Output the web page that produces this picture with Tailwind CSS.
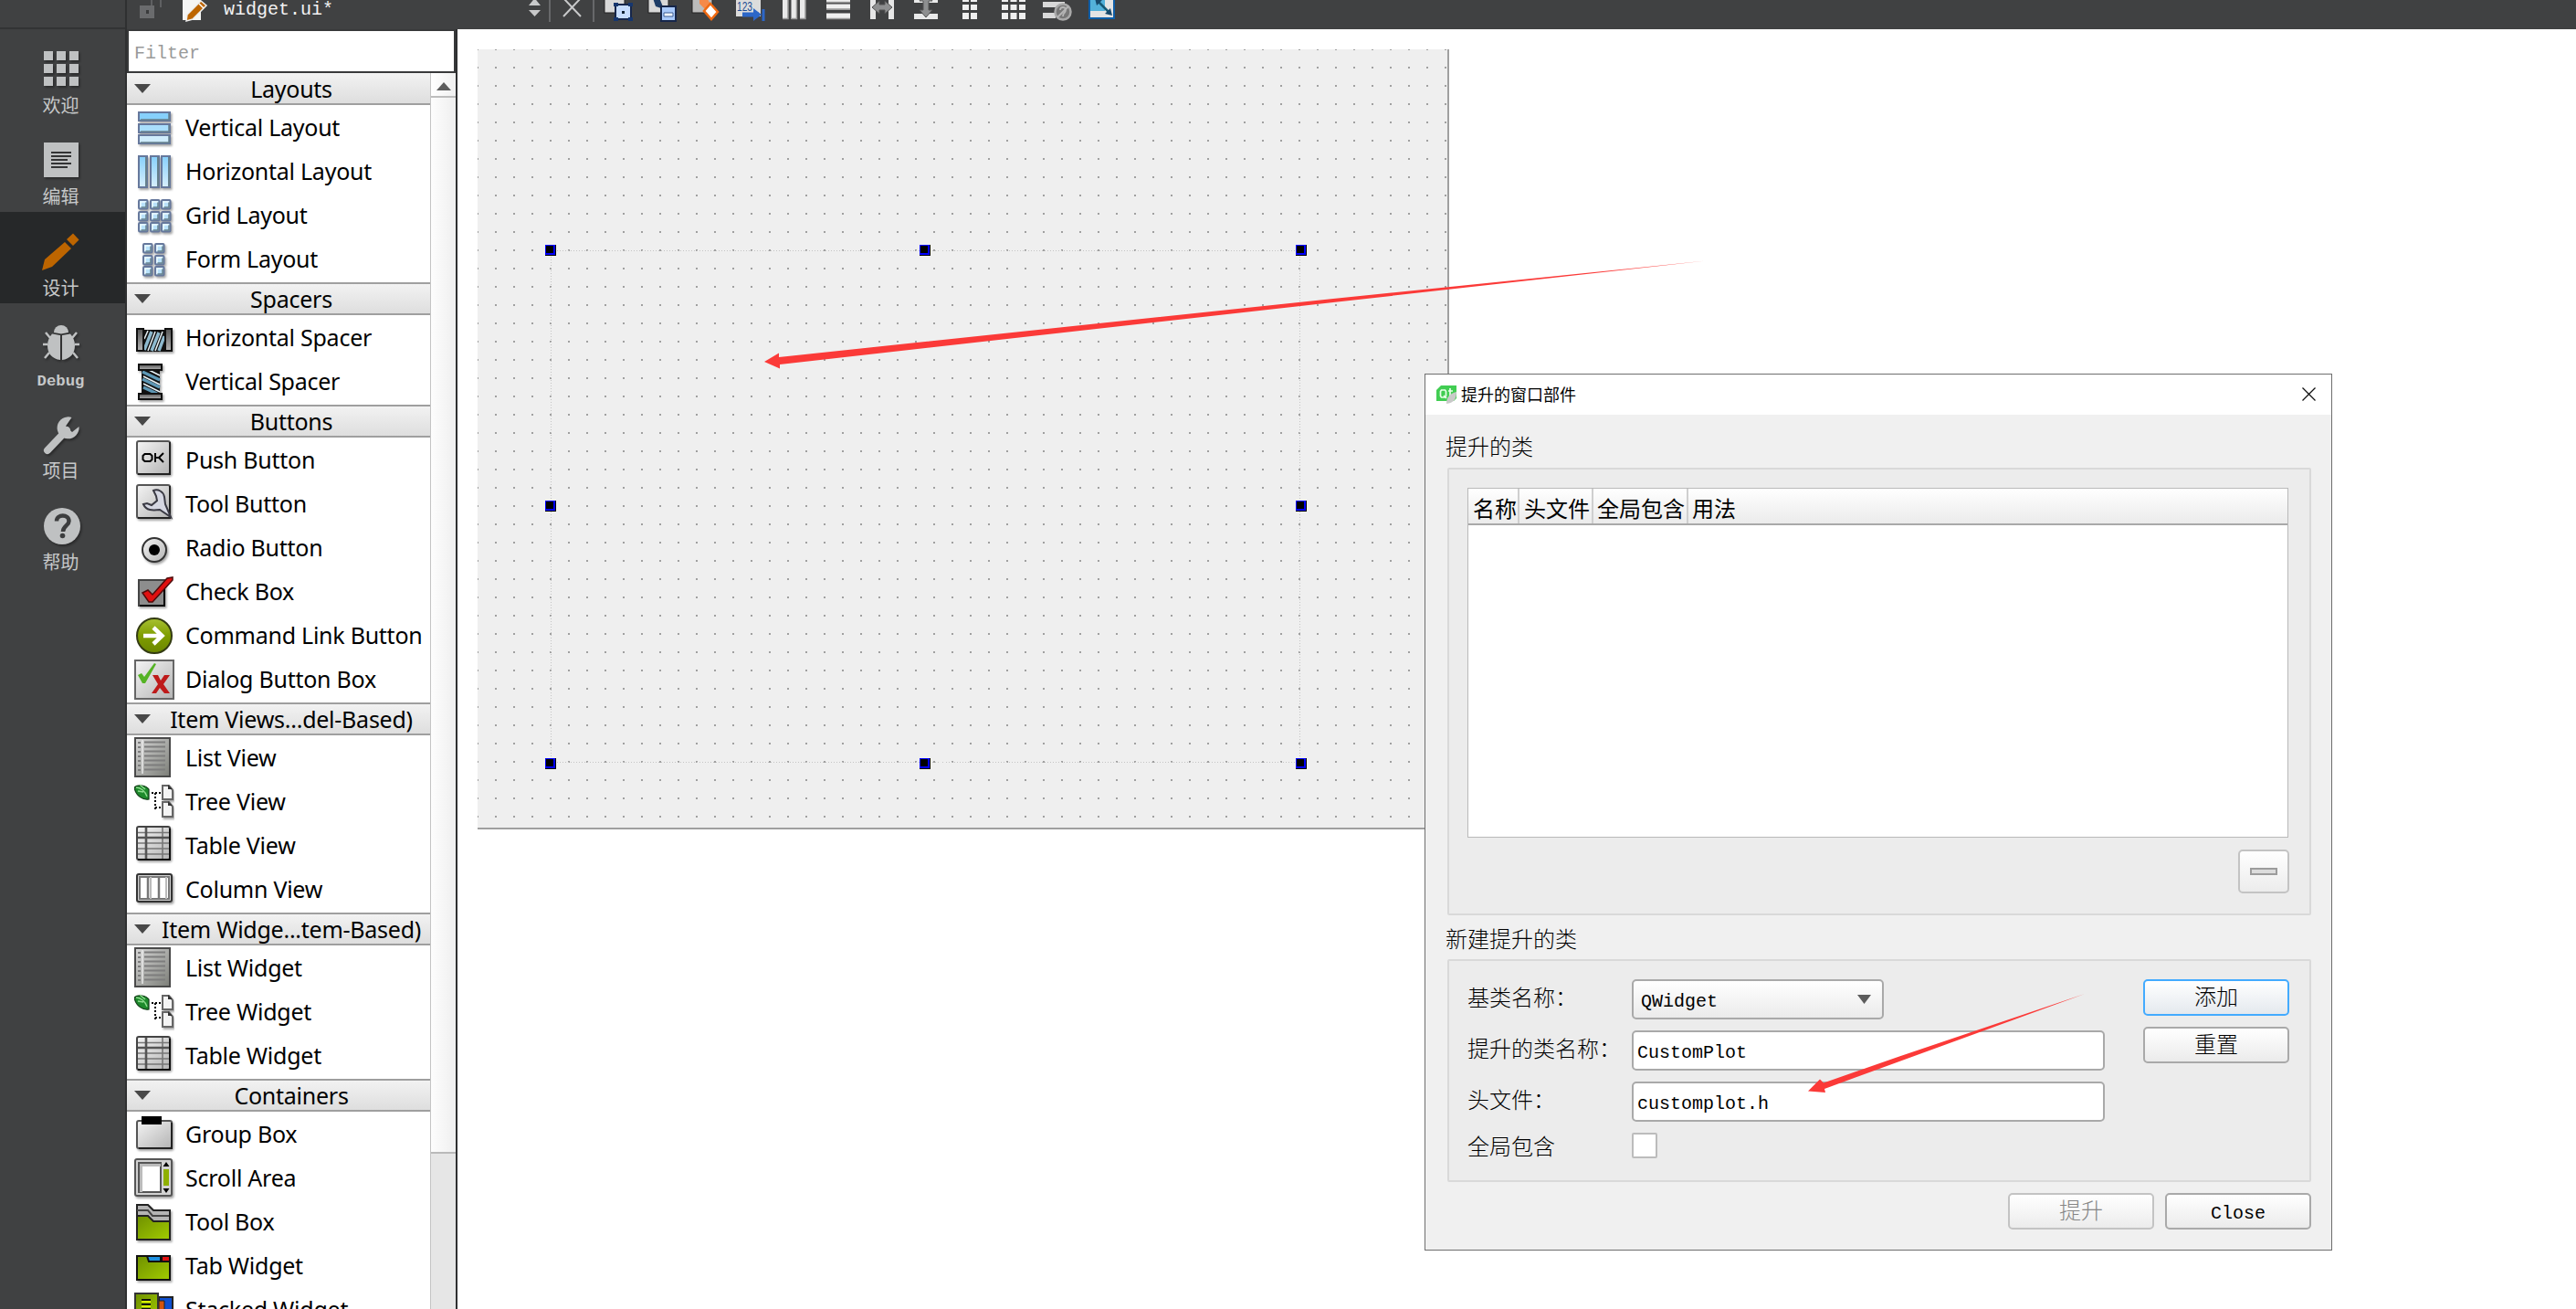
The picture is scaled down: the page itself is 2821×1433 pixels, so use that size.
<!DOCTYPE html>
<html lang="zh-CN">
<head>
<meta charset="utf-8">
<title>widget.ui</title>
<script src="https://cdn.jsdelivr.net/npm/@tailwindcss/browser@4"></script>
</head>
<body class="bg-white">
<svg class="absolute h-0 w-0">
  <defs>
    <linearGradient id="blu" x1="0" y1="0" x2="0" y2="1"><stop offset="0" stop-color="#86d0fb"/><stop offset="1" stop-color="#d8effc"/></linearGradient>
    <linearGradient id="gry" x1="0" y1="0" x2="1" y2="1"><stop offset="0" stop-color="#f4f4f4"/><stop offset="1" stop-color="#b4b4b4"/></linearGradient>
    <linearGradient id="lst" x1="0" y1="0" x2="1" y2="1"><stop offset="0" stop-color="#d8d8d8"/><stop offset="1" stop-color="#7c7e78"/></linearGradient>
    <linearGradient id="met" x1="0" y1="0" x2="0" y2="1"><stop offset="0" stop-color="#555"/><stop offset="1" stop-color="#b5b5b5"/></linearGradient>
    <linearGradient id="grn" x1="0" y1="0" x2="1" y2="1"><stop offset="0" stop-color="#6f9000"/><stop offset="1" stop-color="#a2cc00"/></linearGradient>
    <linearGradient id="cmd" x1="0" y1="0" x2="0" y2="1"><stop offset="0" stop-color="#a8c132"/><stop offset=".5" stop-color="#7f9d00"/><stop offset="1" stop-color="#6b8600"/></linearGradient>
    <filter id="sh" x="-20%" y="-20%" width="150%" height="150%" color-interpolation-filters="sRGB"><feDropShadow dx="1.5" dy="2" stdDeviation="1.2" flood-color="#000" flood-opacity=".35"/></filter>
    <g id="cell"><rect x="1" y="1" width="9.5" height="9.5" rx="1" fill="#b9e2fb" stroke="#66789c" stroke-width="2"/><path d="M3 9V3h6" stroke="#eefaff" stroke-width="1.5" fill="none"/><path d="M9 3.5V9H3.5" stroke="#66808c" stroke-width="1.5" fill="none"/></g>
    <symbol id="i-list" viewBox="0 0 44 46"><rect x="1" y="2" width="38" height="42" fill="url(#lst)" stroke="#4a4a4a" stroke-width="2"/><path d="M4 7h3M4 12h3M4 17h3M4 22h3M4 27h3M4 32h3M4 37h3M11 6.5h23M11 11.5h23M11 16.5h23M11 21.5h23M11 26.5h23M11 31.5h23M11 36.5h23" stroke="#7d7d7d" stroke-width="1.8"/><path d="M9 4v37" stroke="#e8e8e8" stroke-width="1.5"/></symbol>
    <symbol id="i-tree" viewBox="0 0 44 46"><path d="M0 8c4-4 13-2 16 2v11c-6 1-14-3-16-13z" fill="#1d8a2b" stroke="#123d17" stroke-width="1.2"/><path d="M2 8c5 0 10 4 12 10M6 5l6 5M4 12l6 1" stroke="#8fdc8f" stroke-width="1.3" fill="none"/><path d="M19 14h10M23 14v18M23 30h6" stroke="#000" stroke-width="2" stroke-dasharray="2 2" fill="none"/><g fill="#f4f4f4" stroke="#666" stroke-width="2" filter="url(#sh)"><path d="M31 6h7l4 5v10H31z"/><path d="M31 24h7l4 5v11H31z"/></g><path d="M37 5v5h5zM37 23v5h5z" fill="#333"/></symbol>
    <symbol id="i-table" viewBox="0 0 44 46"><g filter="url(#sh)"><rect x="3" y="3" width="36" height="36" rx="2" fill="url(#gry)" stroke="#444" stroke-width="2"/></g><path d="M4 9.500h34M4 21h34M4 27h34M4 33h34M31 4v34" stroke="#777" stroke-width="1.6"/><path d="M13 4v34M4 15h34" stroke="#555" stroke-width="2.600"/><path d="M39 5v34H4" stroke="#111" stroke-width="2" fill="none"/></symbol>
  </defs>
</svg>

<div class="relative flex h-[1433px] w-[2821px] overflow-hidden bg-white">

  <!-- mode selector -->
  <nav class="flex w-[139px] shrink-0 flex-col border-r-2 border-[#2f3031] bg-[#404142] font-['Liberation_Mono','Noto_Sans_CJK_SC',monospace] text-[20px] leading-6 text-[#c6c8c9]">
    <div class="h-8 shrink-0 border-b-2 border-[#323334]"></div>
    <div class="flex h-[100px] flex-col items-center pt-5 pr-1">
      <svg class="h-11 w-11 shrink-0 overflow-visible" viewBox="0 0 44 44" fill="#bfc1c2" filter="url(#sh)"><path d="M3 4h10v10H3zM17 4h10v10H17zM31 4h10v10H31zM3 18h10v10H3zM17 18h10v10H17zM31 18h10v10H31zM3 32h10v10H3zM17 32h10v10H17zM31 32h10v10H31z"/></svg>
      <span class="mt-[10px]">欢迎</span>
    </div>
    <div class="flex h-[100px] flex-col items-center pt-5 pr-1">
      <svg class="h-11 w-11 shrink-0 overflow-visible" viewBox="0 0 44 44" filter="url(#sh)"><rect x="3" y="4" width="38" height="38" fill="#bfc1c2"/><path d="M11 15h22M11 19h22M11 23h18M11 27h22M11 31h18" stroke="#333435" stroke-width="2"/></svg>
      <span class="mt-[10px]">编辑</span>
    </div>
    <div class="flex h-[100px] flex-col items-center bg-[#262829] pt-5 pr-1">
      <svg class="h-11 w-11 shrink-0 overflow-visible" viewBox="0 0 44 44" fill="#bd6500"><path d="M1 44l3-12L26 13l7 7L12 40zM28 10l7-6.500 6.500 7L35 17z"/></svg>
      <span class="mt-[10px]">设计</span>
    </div>
    <div class="flex h-[100px] flex-col items-center pt-5 pr-1">
      <svg class="h-11 w-11 shrink-0 overflow-visible" viewBox="0 0 44 44" fill="#bfc1c2" filter="url(#sh)"><path d="M14 12a8 8 0 0 1 16 0l-8 1.500z"/><path d="M21 15v27C12 41 7 35 7 26c0-5 2-9 5-12.500zM23 15v27c9-1 14-7 14-16 0-5-2-9-5-12.500z"/><path d="M10 18l-5-6M7 25H2M9 34l-5 6M34 18l5-6M37 25h5M35 34l5 6" stroke="#bfc1c2" stroke-width="2.500"/></svg>
      <span class="mt-[10px] text-[17.3px] font-bold">Debug</span>
    </div>
    <div class="flex h-[100px] flex-col items-center pt-5 pr-1">
      <svg class="h-11 w-11 shrink-0 overflow-visible" viewBox="0 0 44 44" filter="url(#sh)"><path d="M7 41L28 19" stroke="#bfc1c2" stroke-width="8" stroke-linecap="round"/><path d="M33.500 5a12 12 0 1 0 8 10l-7.500 6-7-6.500z" fill="#bfc1c2"/></svg>
      <span class="mt-[10px]">项目</span>
    </div>
    <div class="flex h-[100px] flex-col items-center pt-5 pr-1">
      <svg class="h-11 w-11 shrink-0 overflow-visible" viewBox="0 0 44 44" filter="url(#sh)"><circle cx="23" cy="24" r="20" fill="#bfc1c2"/><path d="M17 18.500c0-8 13.500-8 13.500 0 0 5-6.500 5-6.500 11.500" stroke="#3c3d3e" stroke-width="4.500" fill="none"/><circle cx="23.500" cy="34.500" r="2.800" fill="#3c3d3e"/></svg>
      <span class="mt-[10px]">帮助</span>
    </div>
  </nav>

  <div class="flex min-w-0 flex-1 flex-col">
    <!-- toolbar -->
    <header class="flex h-8 shrink-0 items-start bg-[#404142]">
      <svg class="ml-[12px] h-8 w-7 shrink-0" viewBox="0 0 28 32"><path d="M15 6V0M25 8V0" stroke="#5f6062" stroke-width="2"/><path d="M2 6h16v14H2z" fill="#6a6b6d"/><path d="M9 11h3v4H9z" fill="#3a3b3c"/></svg>
      <svg class="ml-[20px] h-8 w-8 shrink-0" viewBox="0 0 32 32"><path d="M1 0h20v22H1z" fill="#f5f5f5"/><path d="M5 23l1-7L21 1l6 5L12 21z" fill="#bd6500" stroke="#eee" stroke-width="1.500"/><path d="M19 4l5 5" stroke="#fff" stroke-width="1.500"/></svg>
      <span class="ml-[14px] h-8 w-[334px] font-['Liberation_Mono',monospace] text-[20px] leading-[22px] text-[#f2f2f2]">widget.ui*</span>
      <svg class="h-8 w-[76px] shrink-0" viewBox="0 0 76 32"><path d="M0 6l6.500-8L13 6zM0 11h13l-6.500 7z" fill="#c8c9ca"/><path d="M23 0v24M71 0v24" stroke="#67686a" stroke-width="2"/><path d="M38 18L57-2M38-2l19 20" stroke="#c8c9ca" stroke-width="2"/></svg>
      <svg class="ml-[7px] h-8 w-8 shrink-0 overflow-visible" viewBox="0 0 32 32"><rect y="-4" width="22" height="18" fill="#d8d8d8" stroke="#222" /><rect x="12" y="5" width="17" height="16" fill="#c6dcfd" stroke="#16264a" stroke-width="2"/><path d="M10 3h5v4h-5zM26 3h5v4h-5zM10 19h5v4h-5zM26 19h5v4h-5z" fill="#16366e"/><path d="M19 12h3v3h-3z" fill="#123"/></svg>
      <svg class="ml-[16px] h-8 w-8 shrink-0 overflow-visible" viewBox="0 0 32 32"><rect y="-4" width="22" height="18" fill="#d8d8d8" stroke="#222"/><path d="M5-2l8 2 4 10-9-3z" fill="#1d3c66"/><rect x="14" y="7" width="16" height="16" fill="#a8c9fb" stroke="#16264a" stroke-width="2"/><path d="M17 14h10v4H17z" fill="#eef5ff" stroke="#3c5c92"/></svg>
      <svg class="ml-[16px] h-8 w-8 shrink-0 overflow-visible" viewBox="0 0 32 32"><rect y="-4" width="22" height="18" fill="#bbb" stroke="#222"/><path d="M8-3h8l4 8-5 6-7-7z" fill="#f58a4a"/><path d="M20 4l8 9-7 8-8-9z" fill="#fff" stroke="#f06a12" stroke-width="2.500"/></svg>
      <svg class="ml-[16px] h-8 w-8 shrink-0 overflow-visible" viewBox="0 0 32 32"><path d="M0 0h27v18H0z" fill="#dcdcdc"/><text x="1" y="12" class="font-['Liberation_Sans',sans-serif] text-[14px]" textLength="17" lengthAdjust="spacingAndGlyphs" fill="#1d4c94">123</text><path d="M7 16h18" stroke="#2c67c8" stroke-width="5"/><path d="M19 9l9 7-9 7z" fill="#2c67c8"/><path d="M30 10v13" stroke="#2c67c8" stroke-width="3"/></svg>
      <svg class="ml-[18px] h-8 w-7 shrink-0" viewBox="0 0 28 32"><path d="M4 0v21M13.500 0v21M23 0v21" stroke="#e9e9e9" stroke-width="6"/><path d="M7 0v20.500H1M16.500 0v20.500h-6M26 0v20.500h-6" stroke="#999" stroke-width="1.500" fill="none"/></svg>
      <svg class="ml-[20px] h-8 w-7 shrink-0" viewBox="0 0 28 32"><path d="M1 0h26M1 7.500h26M1 17.500h26" stroke="#efefef" stroke-width="6"/><path d="M1 2.500h26M1 10h26M1 20.500h26" stroke="#999" stroke-width="1.500"/></svg>
      <svg class="ml-[20px] h-8 w-7 shrink-0" viewBox="0 0 28 32"><path d="M4 0v21M24 0v21" stroke="#e6e6e6" stroke-width="6"/><path d="M3 8l8-7v4h6V1l8 7-8 7v-4h-6v4z" fill="#8e8f90" stroke="#555"/></svg>
      <svg class="ml-[20px] h-8 w-7 shrink-0" viewBox="0 0 28 32"><path d="M1 0h26M1 18h26" stroke="#e9e9e9" stroke-width="6"/><path d="M14 19l-7-8h4V1H7l2-3h10l2 3h-4v10h4z" fill="#8e8f90" stroke="#555"/></svg>
      <svg class="ml-[20px] h-8 w-7 shrink-0" viewBox="0 0 28 32"><path d="M6 0h7v2H6zM15 0h7v2h-7zM6 5h7v6H6zM15 5h7v6h-7zM6 14h7v7H6zM15 14h7v7h-7z" fill="#efefef"/></svg>
      <svg class="ml-[20px] h-8 w-7 shrink-0" viewBox="0 0 28 32"><path d="M1 0h7v2H1zM10.500 0h7v2h-7zM20 0h7v2h-7zM1 5h7v6H1zM10.500 5h7v6h-7zM20 5h7v6h-7zM1 14h7v7H1zM10.500 14h7v7h-7zM20 14h7v7h-7z" fill="#efefef"/></svg>
      <svg class="ml-[18px] h-8 w-8 shrink-0" viewBox="0 0 32 32"><path d="M0 5h24M0 17h14" stroke="#d8d8d8" stroke-width="6"/><circle cx="22" cy="13" r="8.500" fill="#777" stroke="#a9a9a9" stroke-width="2.500"/><path d="M16 19L28 7" stroke="#b5b5b5" stroke-width="2"/><path d="M19 11c0-4 6-4 6 0s-3 2-3 7" stroke="#b5b5b5" stroke-width="1.800" fill="none"/></svg>
      <svg class="ml-[18px] h-8 w-8 shrink-0" viewBox="0 0 32 32"><rect x="1" y="-4" width="27" height="24" fill="#e4e4e4" stroke="#0d5ea8" stroke-width="2"/><path d="M2 0h16v12H2z" fill="#53b1da"/><path d="M10 1l13 13" stroke="#175a75" stroke-width="2.500"/><path d="M26 17l-8-2 6-6zM7-2l8 2-6 6z" fill="#17486b"/></svg>
    </header>

    <div class="flex min-h-0 flex-1">
      <!-- widget box -->
      <aside class="flex w-[362px] shrink-0 flex-col border-r-2 border-[#2f3031] bg-white">
        <div class="h-12 shrink-0 border-2 border-[#38393a] bg-white pl-[6px] font-['Liberation_Mono',monospace] text-[20px] leading-[50px] text-[#9a9a9a]">Filter</div>
        <div class="flex min-h-0 flex-1">
          <div class="min-w-0 flex-1 overflow-hidden font-['Noto_Sans',sans-serif] text-[25px] leading-[34px] tracking-[-0.25px] text-black">

            <div class="flex h-[35px] items-center border-b-2 border-[#9f9f9f] bg-linear-to-b from-[#f2f2f2] to-[#dedede] pl-2"><svg class="h-[10px] w-[18px] shrink-0" viewBox="0 0 18 10"><path d="M0 0h18l-9 10z" fill="#484848"/></svg><span class="flex-1 pt-px pl-[2px] text-center">Layouts</span></div>
            <div class="flex flex-col pb-[2px]">
              <div class="flex h-12 items-center gap-3 pl-2"><svg class="h-11 w-11 shrink-0 overflow-visible" viewBox="0 0 44 44" filter="url(#sh)"><g stroke="#66789c" stroke-width="2"><rect x="5" y="6" width="34" height="9" fill="#86d0fb"/><rect x="5" y="19" width="34" height="9" fill="#a9defc"/><rect x="5" y="31" width="34" height="9" fill="#cfecfc"/></g><path d="M38 7v7H7M38 20v7H7M38 32v7H7" stroke="#66808c" stroke-width="1.500" fill="none"/></svg><span class="-mt-px">Vertical Layout</span></div>
              <div class="flex h-12 items-center gap-3 pl-2"><svg class="h-11 w-11 shrink-0 overflow-visible" viewBox="0 0 44 44" filter="url(#sh)"><g stroke="#66789c" stroke-width="2" fill="url(#blu)"><rect x="5" y="6" width="9" height="34"/><rect x="18" y="6" width="9" height="34"/><rect x="30" y="6" width="9" height="34"/></g><path d="M13 7v32M26 7v32M38 7v32" stroke="#66808c" stroke-width="2"/></svg><span class="-mt-px">Horizontal Layout</span></div>
              <div class="flex h-12 items-center gap-3 pl-2"><svg class="h-11 w-11 shrink-0 overflow-visible" viewBox="0 0 44 44" filter="url(#sh)"><use href="#cell" x="4" y="5"/><use href="#cell" x="17" y="5"/><use href="#cell" x="29" y="5"/><use href="#cell" x="4" y="18"/><use href="#cell" x="17" y="18"/><use href="#cell" x="29" y="18"/><use href="#cell" x="4" y="30"/><use href="#cell" x="17" y="30"/><use href="#cell" x="29" y="30"/></svg><span class="-mt-px">Grid Layout</span></div>
              <div class="flex h-12 items-center gap-3 pl-2"><svg class="h-11 w-11 shrink-0 overflow-visible" viewBox="0 0 44 44" filter="url(#sh)"><use href="#cell" x="9" y="5"/><use href="#cell" x="22" y="5"/><use href="#cell" x="9" y="18"/><use href="#cell" x="22" y="18"/><use href="#cell" x="9" y="30"/><use href="#cell" x="22" y="30"/></svg><span class="-mt-px">Form Layout</span></div>
            </div>

            <div class="flex h-9 items-center border-y-2 border-[#9f9f9f] bg-linear-to-b from-[#f2f2f2] to-[#dedede] pl-2"><svg class="h-[10px] w-[18px] shrink-0" viewBox="0 0 18 10"><path d="M0 0h18l-9 10z" fill="#484848"/></svg><span class="flex-1 pl-[2px] text-center">Spacers</span></div>
            <div class="flex flex-col pb-[2px]">
              <div class="flex h-12 items-center gap-3 pl-2"><svg class="h-11 w-11 shrink-0 overflow-visible" viewBox="0 0 44 44"><g filter="url(#sh)"><rect x="10" y="14" width="24" height="24" fill="#111"/><path d="M11 36l8-20M19 37l8-20M27 37l6-16" stroke="#8db9ce" stroke-width="3.500"/><path d="M11 24l4-9M15 37l8-21M23 37l8-21" stroke="#e8f2f6" stroke-width="1.500"/><rect x="3" y="13" width="7" height="24" fill="url(#met)" stroke="#111" stroke-width="2"/><rect x="34" y="13" width="7" height="24" fill="url(#met)" stroke="#111" stroke-width="2"/></g></svg><span class="-mt-px">Horizontal Spacer</span></div>
              <div class="flex h-12 items-center gap-3 pl-2"><svg class="h-11 w-11 shrink-0 overflow-visible" viewBox="0 0 44 44"><g filter="url(#sh)"><rect x="8" y="10" width="20" height="26" fill="#111"/><path d="M9 12l19 9M9 20l19 9M10 29l15 7" stroke="#5d97b5" stroke-width="3.500"/><path d="M16 10l12 6M10 17l18 9M10 25l18 9" stroke="#e8f2f6" stroke-width="1.500"/><rect x="5" y="4" width="25" height="6" fill="url(#met)" stroke="#111" stroke-width="2"/><rect x="5" y="36" width="25" height="6" fill="url(#met)" stroke="#111" stroke-width="2"/></g></svg><span class="-mt-px">Vertical Spacer</span></div>
            </div>

            <div class="flex h-9 items-center border-y-2 border-[#9f9f9f] bg-linear-to-b from-[#f2f2f2] to-[#dedede] pl-2"><svg class="h-[10px] w-[18px] shrink-0" viewBox="0 0 18 10"><path d="M0 0h18l-9 10z" fill="#484848"/></svg><span class="flex-1 pl-[2px] text-center">Buttons</span></div>
            <div class="flex flex-col pb-[2px]">
              <div class="flex h-12 items-center gap-3 pl-2"><svg class="h-11 w-11 shrink-0 overflow-visible" viewBox="0 0 44 44"><g filter="url(#sh)"><rect x="3" y="2" width="36" height="36" rx="2" fill="url(#gry)" stroke="#555" stroke-width="2"/></g><path d="M39 3v35H4" stroke="#222" stroke-width="2" fill="none"/><path d="M11.500 16h6l2 2v4l-2 2h-6l-2-2v-4zM23 15v10M32 15l-5 5h-4M27 20l5 5" stroke="#000" stroke-width="2" fill="none"/></svg><span class="-mt-px">Push Button</span></div>
              <div class="flex h-12 items-center gap-3 pl-2"><svg class="h-11 w-11 shrink-0 overflow-visible" viewBox="0 0 44 44"><g filter="url(#sh)"><rect x="3" y="2" width="36" height="36" rx="2" fill="url(#gry)" stroke="#555" stroke-width="2"/></g><path d="M39 3v35H4" stroke="#222" stroke-width="2" fill="none"/><path d="M21 8c5-2 11 1 12 7l1 8 6 14-12-8c-8 1-15 1-18-6l4-1 5 2 6-5-1-5z" fill="#d5d7e2" stroke="#3a3a44" stroke-width="2"/></svg><span class="-mt-px">Tool Button</span></div>
              <div class="flex h-12 items-center gap-3 pl-2"><svg class="h-11 w-11 shrink-0 overflow-visible" viewBox="0 0 44 44"><g filter="url(#sh)"><circle cx="22" cy="25" r="13" fill="url(#gry)" stroke="#333" stroke-width="2"/></g><circle cx="22" cy="25" r="6" fill="#000"/></svg><span class="-mt-px">Radio Button</span></div>
              <div class="flex h-12 items-center gap-3 pl-2"><svg class="h-11 w-11 shrink-0 overflow-visible" viewBox="0 0 44 44"><g filter="url(#sh)"><rect x="5" y="10" width="28" height="28" fill="#8d8d8d" stroke="#444" stroke-width="2"/></g><path d="M33 12v26H6" stroke="#000" stroke-width="2" fill="none"/><path d="M9 24l6-3 5 5L36 8l6-1v3L20 34h-4z" fill="#e01010" stroke="#4e0b0b" stroke-width="1.500"/></svg><span class="-mt-px">Check Box</span></div>
              <div class="flex h-12 items-center gap-3 pl-2"><svg class="h-11 w-11 shrink-0 overflow-visible" viewBox="0 0 44 44"><circle cx="22" cy="23" r="19" fill="url(#cmd)" stroke="#333b12" stroke-width="2"/><path d="M10 23h20M21 14l9.500 9-9.500 9" stroke="#fff" stroke-width="4.500" fill="none"/></svg><span class="-mt-px">Command Link Button</span></div>
              <div class="flex h-12 items-center gap-3 pl-2"><svg class="h-11 w-11 shrink-0 overflow-visible" viewBox="0 0 44 44"><rect x="1" y="2" width="42" height="42" fill="url(#gry)" stroke="#666" stroke-width="2"/><path d="M4 18l4-2 3 4L22 5l2 1-12 21H9z" fill="#55b325"/><path d="M20 18h6l3 6 4-6h6l-7 10 7 10h-6l-5-6-4 6h-5l7-10z" fill="#be1a1a"/></svg><span class="-mt-px">Dialog Button Box</span></div>
            </div>

            <div class="flex h-9 items-center border-y-2 border-[#9f9f9f] bg-linear-to-b from-[#f2f2f2] to-[#dedede] pl-2"><svg class="h-[10px] w-[18px] shrink-0" viewBox="0 0 18 10"><path d="M0 0h18l-9 10z" fill="#484848"/></svg><span class="flex-1 pl-[2px] text-center">Item Views...del-Based)</span></div>
            <div class="flex flex-col pb-[2px]">
              <div class="flex h-12 items-center gap-3 pl-2"><svg class="h-[46px] w-11 shrink-0"><use href="#i-list"/></svg><span class="-mt-px">List View</span></div>
              <div class="flex h-12 items-center gap-3 pl-2"><svg class="h-[46px] w-11 shrink-0"><use href="#i-tree"/></svg><span class="-mt-px">Tree View</span></div>
              <div class="flex h-12 items-center gap-3 pl-2"><svg class="h-[46px] w-11 shrink-0"><use href="#i-table"/></svg><span class="-mt-px">Table View</span></div>
              <div class="flex h-12 items-center gap-3 pl-2"><svg class="h-11 w-11 shrink-0 overflow-visible" viewBox="0 0 44 44"><g filter="url(#sh)"><rect x="3" y="6" width="38" height="30" rx="2" fill="#d0d0d0" stroke="#333" stroke-width="2"/></g><path d="M6 9h32v24H6z" fill="#fff" stroke="#777" stroke-width="2"/><path d="M15 9v24M27 9v24" stroke="#777" stroke-width="2.500"/><path d="M18 9v24M35 9v24" stroke="#bbb" stroke-width="2"/></svg><span class="-mt-px">Column View</span></div>
            </div>

            <div class="flex h-9 items-center border-y-2 border-[#9f9f9f] bg-linear-to-b from-[#f2f2f2] to-[#dedede] pl-2"><svg class="h-[10px] w-[18px] shrink-0" viewBox="0 0 18 10"><path d="M0 0h18l-9 10z" fill="#484848"/></svg><span class="flex-1 pl-[2px] text-center">Item Widge...tem-Based)</span></div>
            <div class="flex flex-col pb-[2px]">
              <div class="flex h-12 items-center gap-3 pl-2"><svg class="h-[46px] w-11 shrink-0"><use href="#i-list"/></svg><span class="-mt-px">List Widget</span></div>
              <div class="flex h-12 items-center gap-3 pl-2"><svg class="h-[46px] w-11 shrink-0"><use href="#i-tree"/></svg><span class="-mt-px">Tree Widget</span></div>
              <div class="flex h-12 items-center gap-3 pl-2"><svg class="h-[46px] w-11 shrink-0"><use href="#i-table"/></svg><span class="-mt-px">Table Widget</span></div>
            </div>

            <div class="flex h-9 items-center border-y-2 border-[#9f9f9f] bg-linear-to-b from-[#f2f2f2] to-[#dedede] pl-2"><svg class="h-[10px] w-[18px] shrink-0" viewBox="0 0 18 10"><path d="M0 0h18l-9 10z" fill="#484848"/></svg><span class="flex-1 pl-[2px] text-center">Containers</span></div>
            <div class="flex flex-col pb-[2px]">
              <div class="flex h-12 items-center gap-3 pl-2"><svg class="h-11 w-11 shrink-0 overflow-visible" viewBox="0 0 44 44"><g filter="url(#sh)"><rect x="3" y="8" width="38" height="30" rx="2" fill="url(#gry)" stroke="#555" stroke-width="2"/></g><path d="M41 10v28H5" stroke="#222" stroke-width="2" fill="none"/><path d="M8 3h22v9H8z" fill="#000"/></svg><span class="-mt-px">Group Box</span></div>
              <div class="flex h-12 items-center gap-3 pl-2"><svg class="h-11 w-11 shrink-0 overflow-visible" viewBox="0 0 44 44"><g filter="url(#sh)"><rect x="1" y="2" width="40" height="40" rx="2" fill="#d2d2d2" stroke="#555" stroke-width="2"/></g><path d="M5 6h24v32H5z" fill="#fff" stroke="#555" stroke-width="2"/><path d="M7.500 38V8.500H29" stroke="#bbb" stroke-width="3" fill="none"/><path d="M35 5l3.500 5h-7zM35 39l3.500-5h-7z" fill="#000"/><path d="M32 13h6v18h-6z" fill="#8fb000"/></svg><span class="-mt-px">Scroll Area</span></div>
              <div class="flex h-12 items-center gap-3 pl-2"><svg class="h-11 w-11 shrink-0 overflow-visible" viewBox="0 0 44 44"><g filter="url(#sh)"><path d="M3 4h12l6 6h18v32H3z" fill="#b4b4b4" stroke="#222" stroke-width="2"/></g><path d="M3 10h12l5 6h18" stroke="#444" stroke-width="2" fill="none"/><path d="M3 16h12l6 6h18v20H3z" fill="url(#grn)" stroke="#222" stroke-width="2"/></svg><span class="-mt-px">Tool Box</span></div>
              <div class="flex h-12 items-center gap-3 pl-2"><svg class="h-11 w-11 shrink-0 overflow-visible" viewBox="0 0 44 44"><g filter="url(#sh)"><path d="M3 12h36v26H3z" fill="url(#grn)" stroke="#111" stroke-width="2"/></g><path d="M14 12h15v6H16z" fill="#1e90e0" stroke="#111" stroke-width="2"/><path d="M30 12h9v6h-9z" fill="#e01212" stroke="#111" stroke-width="2"/></svg><span class="-mt-px">Tab Widget</span></div>
              <div class="flex h-12 items-center gap-3 pl-2"><svg class="h-11 w-11 shrink-0 overflow-visible" viewBox="0 0 44 44"><path d="M27 9h15v26H27z" fill="#0f4fd0" stroke="#222" stroke-width="2"/><path d="M27 13h6v20h-6z" fill="#d4540e" stroke="#222"/><path d="M1 5h25v34H1z" fill="url(#grn)" stroke="#333" stroke-width="2"/><path d="M8 12h10M8 17h10M8 22h10" stroke="#111" stroke-width="2"/><path d="M8 14h10M8 19h10" stroke="#d8f000" stroke-width="2"/></svg><span class="-mt-px">Stacked Widget</span></div>
            </div>
          </div>

          <!-- scroll bar -->
          <div class="flex w-[28px] shrink-0 flex-col border-l border-[#c4c4c4]">
            <div class="flex h-[27px] items-center justify-center border-b-2 border-[#bdbdbd] bg-linear-to-r from-white to-[#f0f0f0] pt-1"><svg class="h-[9px] w-4" viewBox="0 0 16 9"><path d="M0 9h16L8 0z" fill="#5c5c5c"/></svg></div>
            <div class="h-[1154px] shrink-0 bg-linear-to-r from-[#fdfdfd] to-[#efefef]"></div>
            <div class="flex-1 border-t-2 border-[#b9b9b9] bg-[#e6e6e6]"></div>
          </div>
        </div>
      </aside>

      <!-- form editor -->
      <main class="min-w-0 flex-1 bg-white pt-[22px] pl-[22px]">
        <svg class="block h-[854px] w-[1064px]" viewBox="0 0 1064 854" shape-rendering="crispEdges">
          <defs>
            <pattern id="dots" width="20" height="20" patternUnits="userSpaceOnUse"><path d="M0 0h1v1H0zM19 0h1v1h-1zM0 19h1v1H0zM19 19h1v1h-1z" fill="#a0a0a0"/></pattern>
            <g id="knob"><path d="M0 0h12v12H0z" fill="#000"/><path d="M0 0h11v11H0z" fill="#00f"/><path d="M1 1h8v8H1z" fill="#000"/></g>
          </defs>
          <path d="M0 0h1062v852H0z" fill="#efefef"/>
          <path d="M0 0h1062v852H0z" fill="url(#dots)"/>
          <path d="M1063 0v853H0" fill="none" stroke="#a0a0a0" stroke-width="2"/>
          <path d="M80.500 220.500h820M80.500 780.500h820M80.500 220.500v560M900.500 220.500v560" stroke="#c4c4c4" stroke-dasharray="1 2"/>
          <use href="#knob" x="74" y="214"/><use href="#knob" x="484" y="214"/><use href="#knob" x="896" y="214"/>
          <use href="#knob" x="74" y="494"/><use href="#knob" x="896" y="494"/>
          <use href="#knob" x="74" y="776"/><use href="#knob" x="484" y="776"/><use href="#knob" x="896" y="776"/>
        </svg>
      </main>
    </div>
  </div>

  <!-- promoted widgets dialog -->
  <section class="absolute top-[409px] left-[1560px] flex h-[960px] w-[994px] flex-col border border-[#6e6e6e] bg-[#f0f0f0] font-['Liberation_Mono','Noto_Sans_CJK_SC',monospace] text-[24px] font-light text-black">
    <div class="flex h-11 shrink-0 items-center bg-white pl-3 font-['Noto_Sans_CJK_SC',sans-serif] text-[18px] font-normal">
      <svg class="h-[22px] w-[23px]" viewBox="0 0 23 22"><path d="M5 1h17v14l-3 3H0V6z" fill="#41cd52"/><path d="M5.500 6h4l1 1.500v5l-1 1.500h-4l-1-1.500v-5zM8 12l3 3M15 4v9l2 1M13 7h5" stroke="#e9ffe9" stroke-width="1.700" fill="none"/><path d="M22 8c0 8-3 12-11 13 0-8 4-11 11-13z" fill="#c9c9c9"/></svg>
      <span class="-mt-[2px] ml-[4px] flex-1">提升的窗口部件</span>
      <svg class="mr-[17px] -mt-px h-[15px] w-[15px] shrink-0" viewBox="0 0 15 15"><path d="M.5.5l14 14M14.500.5l-14 14" stroke="#111" stroke-width="1.300"/></svg>
    </div>
    <div class="flex flex-1 flex-col pr-[22px] pl-6">
      <h2 class="mt-[20px] -ml-[2px] h-9 leading-9">提升的类</h2>
      <div class="mt-[2px] flex h-[490px] flex-col rounded-xs border-2 border-[#d9d9d9] bg-[#ececec] px-5 pt-5">
        <div class="mr-[3px] h-[383px] border border-[#b9b9b9] bg-white">
          <div class="flex h-10 border-b-2 border-[#a9a9a9] bg-linear-to-b from-white to-[#ebebeb] font-['Noto_Sans_CJK_SC',sans-serif] leading-[42px] font-normal">
            <span class="w-14 border-r-2 border-[#cfcfcf] pl-[5px]">名称</span>
            <span class="w-[81px] border-r-2 border-[#cfcfcf] pl-[5px]">头文件</span>
            <span class="w-[104px] border-r-2 border-[#cfcfcf] pl-[4px] whitespace-nowrap">全局包含</span>
            <span class="pl-[4px]">用法</span>
          </div>
        </div>
        <div class="mt-[13px] mr-[2px] flex h-12 w-14 items-center justify-center self-end rounded-[5px] border-2 border-[#c3c3c3] bg-linear-to-b from-white to-[#ececec]"><div class="h-2 w-[30px] border-2 border-[#9c9c9c] bg-[#dcdcdc]"></div></div>
      </div>
      <h2 class="mt-[11px] -ml-[2px] h-9 leading-9">新建提升的类</h2>
      <div class="mt-px flex h-[244px] justify-between rounded-xs border-2 border-[#d9d9d9] bg-[#ececec] pt-5 pr-[22px] pl-5">
        <div class="grid h-[196px] grid-cols-[180px_518px] grid-rows-[44px_44px_44px_28px] gap-y-3">
          <label class="leading-[46px] whitespace-nowrap">基类名称：</label>
          <div class="flex h-11 w-[276px] items-center justify-between rounded-[5px] border-2 border-[#a9a9a9] bg-linear-to-b from-white to-[#ebebeb] pr-3 pl-[8px] text-[20px] font-normal"><span class="pt-[6px]">QWidget</span><svg class="h-[10px] w-[15px]" viewBox="0 0 15 10"><path d="M0 0h15L7.500 10z" fill="#5c5c5c"/></svg></div>
          <label class="leading-[46px] whitespace-nowrap">提升的类名称：</label>
          <div class="flex h-11 items-center rounded-[5px] border-2 border-[#a9a9a9] bg-white pt-[6px] pl-1 text-[20px] font-normal">CustomPlot</div>
          <label class="leading-[46px] whitespace-nowrap">头文件：</label>
          <div class="flex h-11 items-center rounded-[5px] border-2 border-[#a9a9a9] bg-white pt-[6px] pl-1 text-[20px] font-normal">customplot.h</div>
          <label class="leading-[36px] whitespace-nowrap">全局包含</label>
          <div class="h-7 w-7 rounded-xs border-2 border-[#bcbcbc] bg-white"></div>
        </div>
        <div class="flex w-[160px] flex-col gap-3 text-center">
          <div class="h-10 rounded-[5px] border-2 border-[#43abff] bg-linear-to-b from-white to-[#e4e9ee] leading-[40px]">添加</div>
          <div class="h-10 rounded-[5px] border-2 border-[#a9a9a9] bg-linear-to-b from-white to-[#ebebeb] leading-[40px]">重置</div>
        </div>
      </div>
      <div class="mt-3 flex justify-end gap-3 text-center">
        <div class="h-10 w-[160px] rounded-[5px] border-2 border-[#c3c3c3] bg-linear-to-b from-white to-[#ececec] leading-[40px] text-[#858585]">提升</div>
        <div class="h-10 w-[160px] rounded-[5px] border-2 border-[#a9a9a9] bg-linear-to-b from-white to-[#ebebeb] text-[20px] leading-[41px] font-normal">Close</div>
      </div>
    </div>
  </section>

  <!-- annotation arrows -->
  <svg class="pointer-events-none absolute inset-0 h-[1433px] w-[2821px]" viewBox="0 0 2821 1433" fill="#fb3a38">
    <path d="M837 396l16-9.500v4.500L1460 327 1868 285.500 1460 331 854 399v4.500z"/>
    <path d="M1980 1194.500l13-13 4 4 83-29L2283 1088l-203 74-82 30 1 4z"/>
  </svg>
</div>
</body>
</html>
